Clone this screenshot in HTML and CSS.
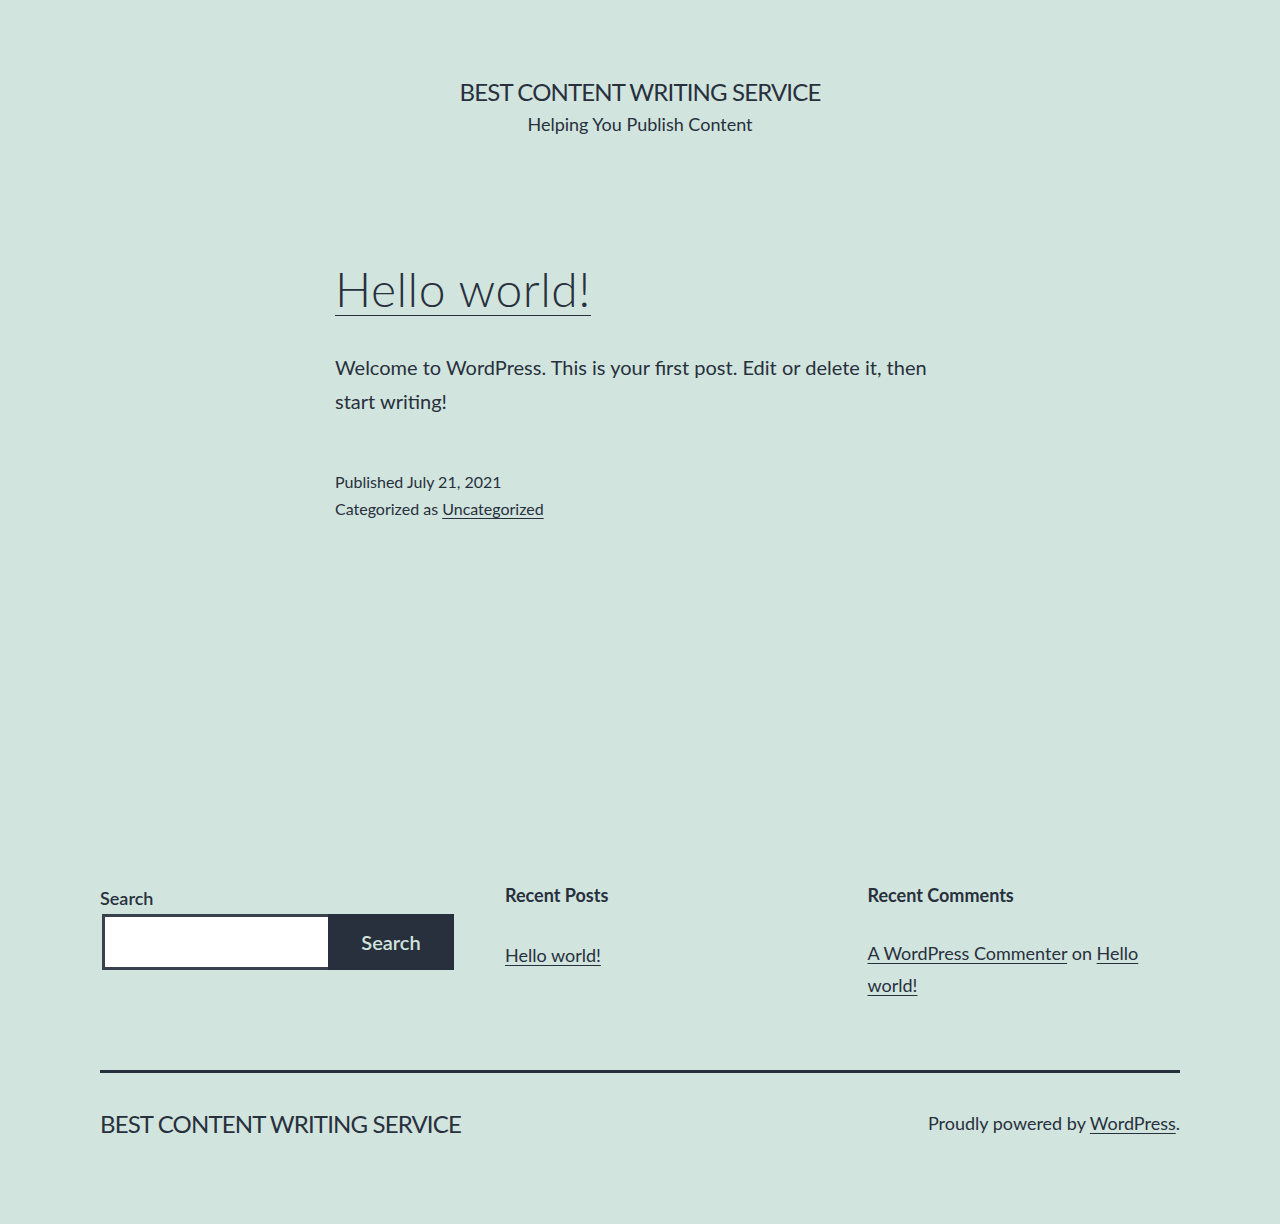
FILE: index.html
```html
<!DOCTYPE html>
<html lang="en">
<head>
<meta charset="utf-8">
<title>Best Content Writing Service – Helping You Publish Content</title>
<link rel="stylesheet" href="styles.css">
</head>
<body>
<header class="site-header">
  <p class="site-title">Best Content Writing Service</p>
  <p class="site-description">Helping You Publish Content</p>
</header>

<main class="site-main">
  <article class="post">
    <h2 class="entry-title"><a href="#">Hello world!</a></h2>
    <div class="entry-content">
      <p>Welcome to WordPress. This is your first post. Edit or delete it, then start writing!</p>
    </div>
    <footer class="entry-footer">
      <div class="meta-line">Published July 21, 2021</div>
      <div class="meta-line">Categorized as <a href="#">Uncategorized</a></div>
    </footer>
  </article>
</main>

<aside class="widget-area">
  <section class="widget widget-search">
    <label class="search-label" for="s">Search</label>
    <form class="search-form">
      <input class="search-input" id="s" type="search">
      <button class="search-button" type="button">Search</button>
    </form>
  </section>
  <section class="widget">
    <h2 class="widget-title">Recent Posts</h2>
    <ul class="widget-list posts-list">
      <li><a href="#">Hello world!</a></li>
    </ul>
  </section>
  <section class="widget">
    <h2 class="widget-title">Recent Comments</h2>
    <ul class="widget-list comments-list">
      <li><a href="#">A WordPress Commenter</a> on <a href="#">Hello world!</a></li>
    </ul>
  </section>
</aside>

<footer class="site-footer">
  <p class="footer-title">Best Content Writing Service</p>
  <p class="powered-by">Proudly powered by <a href="#">WordPress</a>.</p>
</footer>
</body>
</html>
```

FILE: styles.css
```css
html {
  background: #d1e4dd;
}
body {
  margin: 0;
  background: #d1e4dd;
  color: #28303d;
  font-family: "Lato", "Liberation Sans", sans-serif;
  font-size: 20px;
  line-height: 1.7;
}
a {
  color: #28303d;
  text-decoration: underline;
  text-decoration-thickness: 1px;
  text-underline-offset: 3px;
}
p { margin: 0; }

.site-header {
  padding-top: 76px;
  text-align: center;
}
.site-title {
  font-size: 24px;
  line-height: 1.3;
  text-transform: uppercase;
  letter-spacing: -0.85px;
}
.site-description {
  margin-top: 5px;
  font-size: 18px;
  line-height: 1.4;
}

.site-main {
  width: 610px;
  margin: 121px auto 0;
}
.entry-title {
  margin: 0;
  font-size: 48px;
  font-weight: 300;
  line-height: 1.3;
  letter-spacing: 0.5px;
}
.entry-title a {
  text-underline-offset: 8px;
}
.entry-content {
  margin-top: 29px;
}
.entry-footer {
  margin-top: 50px;
  font-size: 16px;
  line-height: 1.7;
}

.widget-area {
  width: 1080px;
  margin: 362px auto 0;
  display: grid;
  grid-template-columns: 355px 1fr 1fr;
  column-gap: 50px;
}
.widget-title {
  margin: 0;
  font-size: 18px;
  font-weight: 700;
  line-height: 1.3;
}
.widget-search {
  padding-top: 3px;
}
.search-label {
  display: block;
  font-size: 18px;
  font-weight: 600;
  line-height: 1.3;
}
.search-form {
  display: flex;
  margin-top: 3px;
  padding-left: 2px;
}
.search-input {
  box-sizing: border-box;
  width: 226px;
  height: 56px;
  margin: 0;
  border: 3px solid #39414d;
  border-right: 0;
  background: #fff;
  font: inherit;
  outline: none;
}
.search-button {
  box-sizing: border-box;
  width: 126px;
  height: 56px;
  margin: 0;
  border: 0;
  background: #28303d;
  color: #d1e4dd;
  font-family: inherit;
  font-size: 20px;
  font-weight: 600;
  line-height: 1;
  padding: 0;
}
.widget-list {
  list-style: none;
  margin: 0;
  padding: 0;
  font-size: 18px;
  line-height: 1.7;
}
.posts-list { margin-top: 32px; }
.comments-list {
  margin-top: 29px;
  line-height: 32px;
}

.site-footer {
  width: 1080px;
  margin: 69px auto 0;
  border-top: 3px solid #28303d;
  padding: 35px 0 85px;
  display: flex;
  justify-content: space-between;
  align-items: center;
}
.footer-title {
  font-size: 24px;
  line-height: 1.3;
  text-transform: uppercase;
  letter-spacing: -0.85px;
}
.powered-by {
  font-size: 18px;
  line-height: 1.4;
}
```
